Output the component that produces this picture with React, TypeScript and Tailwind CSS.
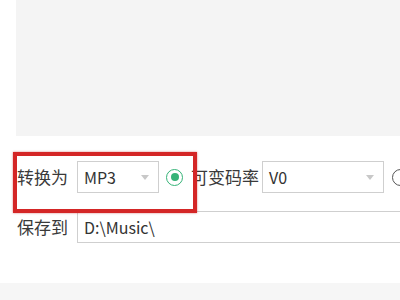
const cjk = { fontFamily: '"Noto Sans CJK SC", "Noto Sans", sans-serif' };

function Select({ value, width }: { value: string; width: string }) {
  return (
    <div
      className={`${width} h-[32px] shrink-0 border border-[#cfcfcf] bg-white flex items-center justify-between pl-[6px] pr-[9px]`}
    >
      <span className="text-[16px] text-[#333]" style={cjk}>
        {value}
      </span>
      <svg width="8" height="5" viewBox="0 0 8 5">
        <path d="M0 0 L8 0 L4 5 Z" fill="#c8c8c8" />
      </svg>
    </div>
  );
}

function Radio({ checked }: { checked: boolean }) {
  return (
    <div
      className={`w-[17px] h-[17px] shrink-0 rounded-full border-[1.5px] flex items-center justify-center ${
        checked ? 'border-[#35b377]' : 'border-[#555]'
      }`}
    >
      {checked && <div className="w-[8px] h-[8px] rounded-full bg-[#35b377]" />}
    </div>
  );
}

export default function App() {
  return (
    <div className="relative w-[400px] h-[300px] overflow-hidden bg-white" style={cjk}>
      <div className="ml-4 h-[136px] bg-[#f4f4f4]" />

      <div className="mt-[25px] flex items-center pl-[17px] w-[420px]">
        <span className="w-[60px] shrink-0 text-[17px] text-[#3a3a3a]">转换为</span>
        <Select value="MP3" width="w-[82px]" />
        <div className="ml-[7px]">
          <Radio checked />
        </div>
        <span className="ml-[8px] w-[68px] shrink-0 text-[17px] text-[#3a3a3a]">可变码率</span>
        <div className="ml-[3px]">
          <Select value="V0" width="w-[122px]" />
        </div>
        <div className="ml-[8px]">
          <Radio checked={false} />
        </div>
      </div>

      <div className="mt-[18px] flex items-center pl-[17px]">
        <span className="w-[60px] shrink-0 text-[17px] text-[#3a3a3a]">保存到</span>
        <div className="flex-1 h-[32px] border border-[#cfcfcf] border-r-0 flex items-center pl-[6px]">
          <span className="text-[16px] text-[#333]">D:\Music\</span>
        </div>
      </div>

      <div className="mt-[40px] h-[17px] bg-[#f6f6f6]" />

      <div className="absolute left-[13px] top-[152px] w-[184px] h-[61px] border-[4px] border-[#d42626] shadow-[0_0_2px_rgba(180,0,0,0.5)]" />
    </div>
  );
}
